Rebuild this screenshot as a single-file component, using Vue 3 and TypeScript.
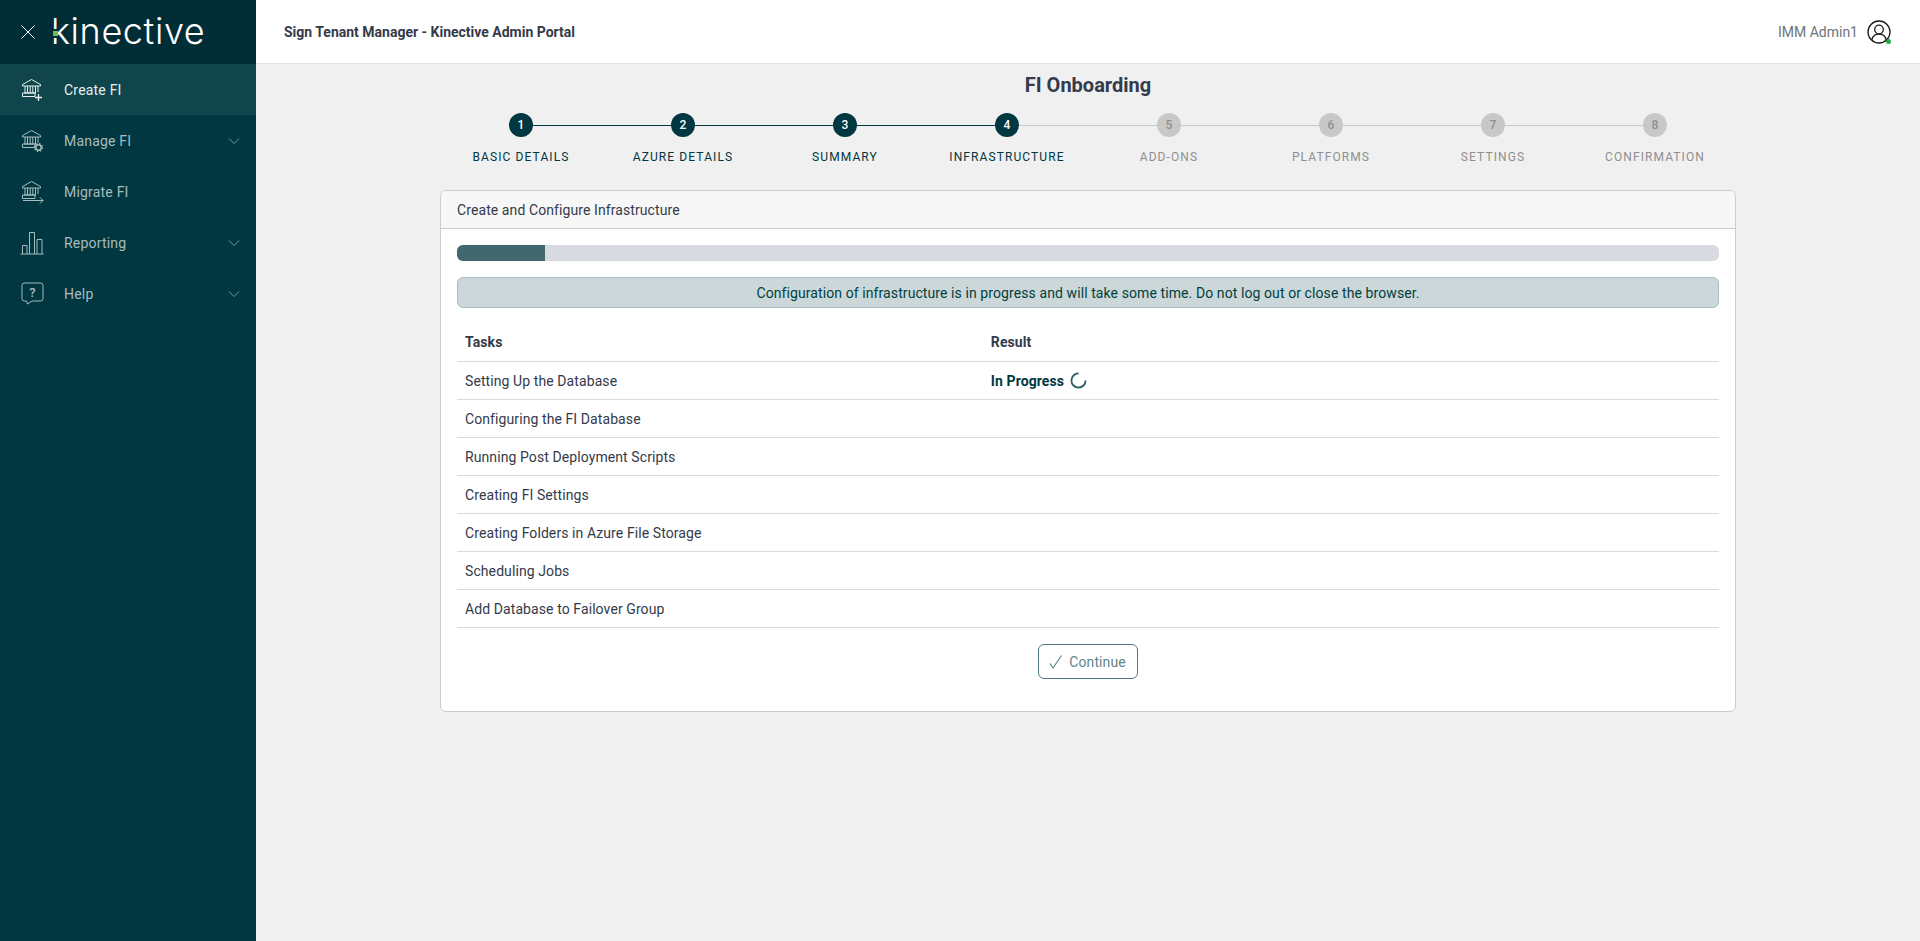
<script setup lang="ts">
interface NavItem {
  label: string
  icon: string
  active?: boolean
  expandable?: boolean
}

const navItems: NavItem[] = [
  { label: 'Create FI', icon: 'create', active: true },
  { label: 'Manage FI', icon: 'manage', expandable: true },
  { label: 'Migrate FI', icon: 'migrate' },
  { label: 'Reporting', icon: 'report', expandable: true },
  { label: 'Help', icon: 'help', expandable: true }
]

const steps = [
  'Basic Details',
  'Azure Details',
  'Summary',
  'Infrastructure',
  'Add-ons',
  'Platforms',
  'Settings',
  'Confirmation'
]
const currentStep = 4

const tasks = [
  'Setting Up the Database',
  'Configuring the FI Database',
  'Running Post Deployment Scripts',
  'Creating FI Settings',
  'Creating Folders in Azure File Storage',
  'Scheduling Jobs',
  'Add Database to Failover Group'
]
</script>

<template>
  <div class="layout">
    <aside class="sidebar">
      <div class="brand">
        <svg class="close" viewBox="0 0 16 16" width="16" height="16">
          <path d="M1.500 1.500l13 13M14.500 1.500l-13 13" fill="none" stroke="#fff" stroke-width="1" />
        </svg>
        <span class="logo">kinective<i class="logo-dot"></i></span>
      </div>
      <nav>
        <a v-for="item in navItems" :key="item.label" class="nav-item" :class="{ active: item.active }">
          <svg class="nav-icon" viewBox="0 0 24 24" width="24" height="24" fill="none" stroke="currentColor" stroke-width="1">
            <template v-if="item.icon === 'create' || item.icon === 'manage' || item.icon === 'migrate'">
              <path d="M2.500 6.500 11.500 1.500 20.500 6.500V8H2.500z" />
              <path d="M5 8v7M7.500 8v7M10.200 8v7M12.800 8v7M15.500 8v7M18 8v6" />
              <path d="M4 15h12M2.500 18.500H15V15H2.500z" />
            </template>
            <path v-if="item.icon === 'create'" d="M18.500 16v7M15 19.500h7" stroke-width="1.300" />
            <template v-if="item.icon === 'manage'">
              <circle cx="18.500" cy="18.500" r="2.700" stroke-width="1.500" />
              <circle cx="18.500" cy="18.500" r="4" stroke-width="1.200" stroke-dasharray="1.500 1.640" />
            </template>
            <path v-if="item.icon === 'migrate'" d="M3 20.500h20M20 17.500l3 3-3 3" />
            <template v-if="item.icon === 'report'">
              <path d="M0.500 23h23" />
              <path d="M2.500 23v-8.500h4.500V23M9.500 23V1.500h5V23M17 23V8.500h5V23" />
            </template>
            <template v-if="item.icon === 'help'">
              <path d="M4.500 1h16A2.500 2.500 0 0 1 23 3.500v13a2.500 2.500 0 0 1-2.500 2.500H12l-4.500 3-1-3H4.500A2.500 2.500 0 0 1 2 16.500v-13A2.500 2.500 0 0 1 4.500 1z" />
              <text x="12.500" y="14.500" text-anchor="middle" class="help-mark">?</text>
            </template>
          </svg>
          <span class="nav-label">{{ item.label }}</span>
          <svg v-if="item.expandable" class="chevron" viewBox="0 0 12 8" width="12" height="8">
            <path d="M1 1.500l5 5 5-5" fill="none" stroke="currentColor" stroke-width="0.9" />
          </svg>
        </a>
      </nav>
    </aside>

    <div class="main">
      <header class="topbar">
        <span class="portal-title">Sign Tenant Manager - Kinective Admin Portal</span>
        <div class="user">
          <span class="user-name">IMM Admin1</span>
          <span class="avatar">
            <svg viewBox="0 0 24 24" width="24" height="24" fill="none" stroke="#1b1b1b" stroke-width="1.300">
              <circle cx="12" cy="12" r="11" />
              <circle cx="12" cy="9.500" r="4.300" />
              <path d="M4.800 20c.8-3.800 3.500-6 7.200-6s6.400 2.200 7.200 6" />
            </svg>
            <i class="status-dot"></i>
          </span>
        </div>
      </header>

      <main class="content">
        <h1 class="page-title">FI Onboarding</h1>
        <ol class="stepper">
          <li
            v-for="(step, i) in steps"
            :key="step"
            class="step"
            :class="{ done: i + 1 <= currentStep, linked: i + 1 < currentStep, last: i === steps.length - 1 }"
          >
            <span class="step-num">{{ i + 1 }}</span>
            <span class="step-label">{{ step }}</span>
          </li>
        </ol>

        <section class="card">
          <div class="card-header">Create and Configure Infrastructure</div>
          <div class="card-body">
            <div class="progress"><div class="progress-fill" :style="{ width: '7%' }"></div></div>
            <div class="alert">Configuration of infrastructure is in progress and will take some time. Do not log out or close the browser.</div>
            <div class="table">
              <div class="row head">
                <div>Tasks</div>
                <div>Result</div>
              </div>
              <div v-for="(task, i) in tasks" :key="task" class="row">
                <div>{{ task }}</div>
                <div v-if="i === 0" class="status">
                  In Progress
                  <svg class="spinner" viewBox="0 0 18 18" width="17" height="17">
                    <circle cx="9" cy="9" r="7.500" fill="none" stroke="#2f5f66" stroke-width="1.900" stroke-dasharray="35.300 11.800" />
                  </svg>
                </div>
                <div v-else></div>
              </div>
            </div>
            <div class="actions">
              <button class="btn" type="button">
                <svg viewBox="0 0 16 16" width="16" height="16">
                  <path d="M2 9.500l3 4.500L13.500 1.500" fill="none" stroke="#5f8589" stroke-width="1.200" />
                </svg>
                Continue
              </button>
            </div>
          </div>
        </section>
      </main>
    </div>
  </div>
</template>

<style>
html,
body {
  margin: 0;
  background: #f0f0f0;
}
</style>

<style scoped>
.layout {
  display: flex;
  height: 941px;
  overflow: hidden;
  font-family: Roboto, "Liberation Sans", sans-serif;
  font-size: 14px;
  letter-spacing: 0.09px;
  color: #343a4a;
}

.sidebar {
  width: 256px;
  flex-shrink: 0;
  background: #013740;
}

.brand {
  height: 64px;
  display: flex;
  align-items: center;
  padding-left: 20px;
  gap: 15px;
  background: #012d36;
}

.logo {
  position: relative;
  font-family: Inter, Roboto, sans-serif;
  font-weight: 300;
  font-size: 36px;
  line-height: 1;
  letter-spacing: 0.6px;
  color: #fff;
  margin-top: -2px;
}

.logo-dot {
  position: absolute;
  left: 2px;
  top: 16px;
  width: 5px;
  height: 5px;
  background: #6cc24a;
  border-top: 2px solid #012d36;
  border-bottom: 2px solid #012d36;
}

.nav-item {
  height: 51px;
  display: flex;
  align-items: center;
  padding: 0 16px 0 20px;
  color: #a6bcbf;
}

.nav-item.active {
  background: #0f454b;
  color: #e6eeee;
}

.nav-icon {
  flex-shrink: 0;
}

.nav-label {
  margin-left: 20px;
  flex: 1;
  letter-spacing: 0.2px;
}

.help-mark {
  font-size: 13px;
  font-weight: 500;
  fill: currentColor;
  stroke: none;
}

.chevron {
  opacity: 0.8;
}

.main {
  flex: 1;
  min-width: 0;
  display: flex;
  flex-direction: column;
}

.topbar {
  height: 64px;
  box-sizing: border-box;
  flex-shrink: 0;
  display: flex;
  align-items: center;
  justify-content: space-between;
  padding: 0 29px 0 28px;
  background: #fff;
  border-bottom: 1px solid #dee2e6;
}

.portal-title {
  font-weight: 700;
  font-size: 14px;
  letter-spacing: 0;
}

.user {
  display: flex;
  align-items: center;
  gap: 9px;
}

.user-name {
  color: #6c757d;
  letter-spacing: 0;
}

.avatar {
  position: relative;
  display: flex;
}

.status-dot {
  position: absolute;
  right: 0;
  bottom: 0;
  width: 5px;
  height: 5px;
  border-radius: 50%;
  background: #28a745;
}

.content {
  width: 1296px;
  margin: 0 auto;
}

.page-title {
  margin: 9px 0 16px;
  text-align: center;
  font-size: 20px;
  line-height: 24px;
  font-weight: 700;
  letter-spacing: 0;
}

.stepper {
  display: grid;
  grid-template-columns: repeat(8, 1fr);
  list-style: none;
  margin: 0 0 24px;
  padding: 0;
}

.step {
  position: relative;
  display: flex;
  flex-direction: column;
  align-items: center;
  color: #8f8f8f;
}

.step::after {
  content: "";
  position: absolute;
  top: 11.500px;
  left: 50%;
  width: 100%;
  height: 1px;
  background: #c8c8c8;
}

.step.linked::after {
  background: #013740;
}

.step.last::after {
  display: none;
}

.step-num {
  position: relative;
  z-index: 1;
  width: 24px;
  height: 24px;
  border-radius: 50%;
  background: #c8c8c8;
  font-size: 12px;
  font-weight: 500;
  line-height: 24px;
  text-align: center;
  letter-spacing: 0;
}

.step.done .step-num {
  background: #013740;
  color: #fff;
}

.step-label {
  margin-top: 11px;
  font-size: 12px;
  line-height: 18px;
  letter-spacing: 1.1px;
  text-transform: uppercase;
}

.step.done .step-label {
  color: #013740;
}

.card {
  height: 522px;
  box-sizing: border-box;
  background: #fff;
  border: 1px solid #ccc;
  border-radius: 6px;
  overflow: hidden;
}

.card-header {
  height: 38px;
  box-sizing: border-box;
  padding: 0 16px;
  display: flex;
  align-items: center;
  background: #f7f7f7;
  border-bottom: 1px solid #ccc;
}

.card-body {
  padding: 16px;
}

.progress {
  height: 16px;
  border-radius: 6px;
  background: #d7dbdf;
  overflow: hidden;
}

.progress-fill {
  height: 100%;
  background: #40686d;
}

.alert {
  margin-top: 16px;
  height: 31px;
  box-sizing: border-box;
  display: flex;
  align-items: center;
  justify-content: center;
  border: 1px solid #a9c0c0;
  border-radius: 6px;
  background: #ccd7d9;
  color: #013f3f;
}

.table {
  margin-top: 16px;
}

.row {
  display: grid;
  grid-template-columns: 5fr 7fr;
  height: 38px;
  box-sizing: border-box;
  align-items: center;
  border-bottom: 1px solid #d9d9d9;
}

.row > div {
  padding: 0 8px;
}

.row.head {
  font-weight: 700;
  padding-bottom: 2px;
}

.status {
  display: flex;
  align-items: center;
  gap: 6px;
  font-weight: 700;
  color: #013740;
}

.actions {
  display: flex;
  justify-content: center;
  margin-top: 16px;
}

.btn {
  display: flex;
  align-items: center;
  justify-content: center;
  gap: 5px;
  width: 100px;
  height: 35px;
  padding: 0 2px 0 0;
  background: #fff;
  border: 1px solid #4f7a7f;
  border-radius: 6px;
  color: #5f8589;
  font: inherit;
  letter-spacing: inherit;
}
</style>
